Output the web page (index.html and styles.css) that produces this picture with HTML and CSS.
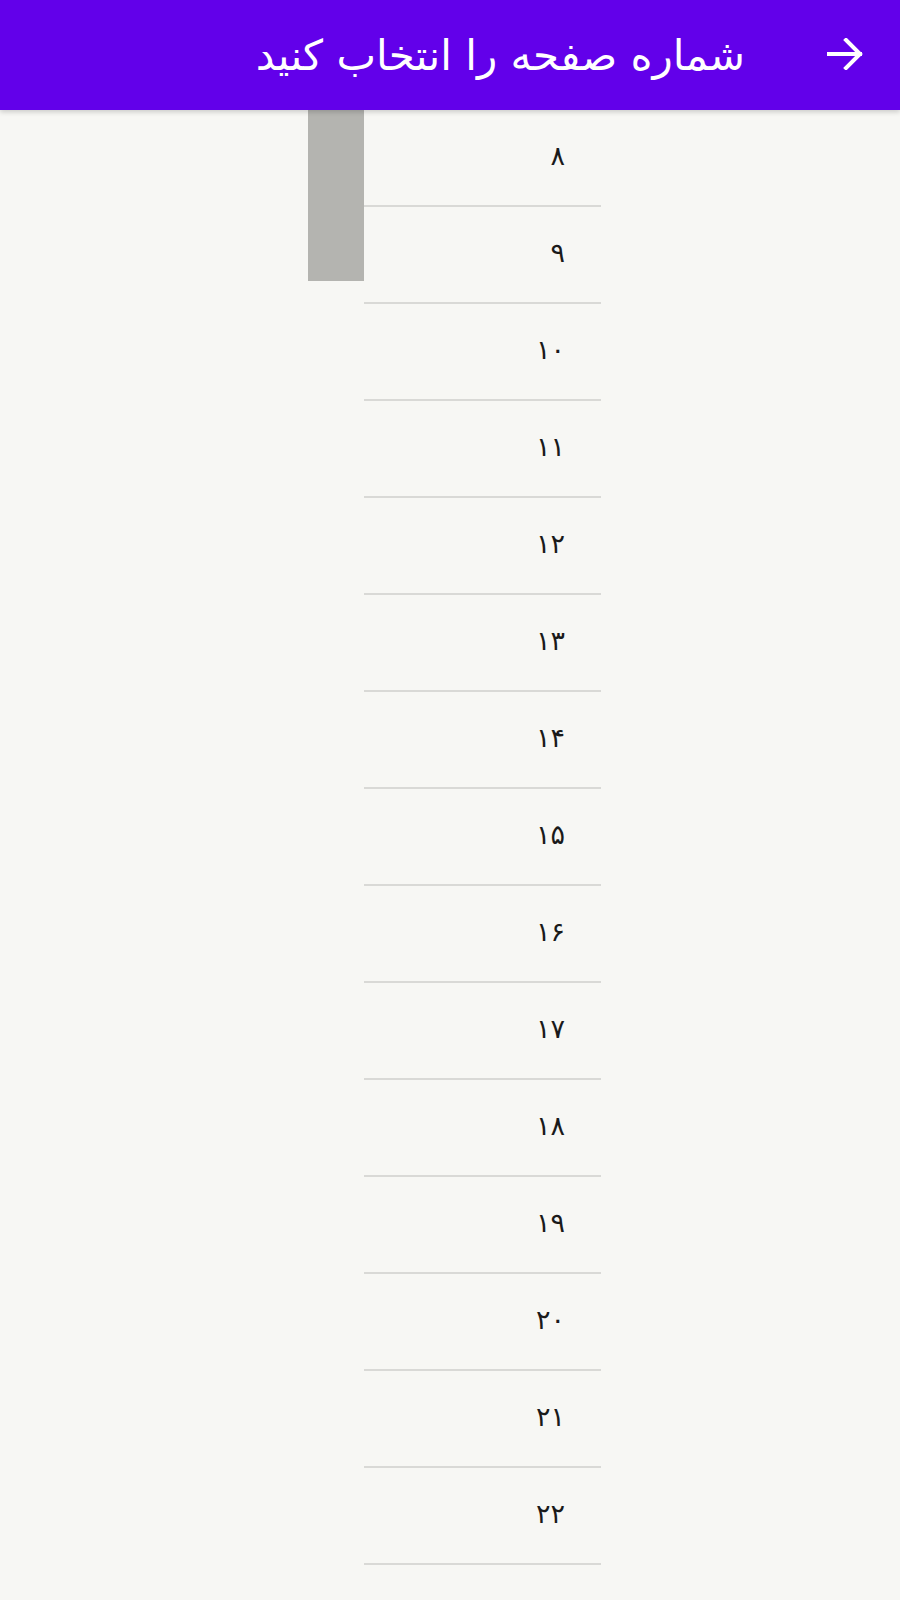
FILE: index.html
```html
<!DOCTYPE html>
<html lang="fa" dir="rtl">
<head>
<meta charset="utf-8">
<title>شماره صفحه را انتخاب کنید</title>
<link rel="stylesheet" href="styles.css">
</head>
<body>
<header class="appbar">
  <span class="back">
    <svg width="36" height="32" viewBox="0 0 36 32" aria-hidden="true">
      <path d="M2 16H33M19 2L33 16L19 30" fill="none" stroke="#fff" stroke-width="4" stroke-linecap="square"/>
    </svg>
  </span>
  <h1 class="title">شماره صفحه را انتخاب کنید</h1>
</header>
<main class="picker">
  <ul class="pages">
    <li class="page">۸</li>
    <li class="page">۹</li>
    <li class="page">۱۰</li>
    <li class="page">۱۱</li>
    <li class="page">۱۲</li>
    <li class="page">۱۳</li>
    <li class="page">۱۴</li>
    <li class="page">۱۵</li>
    <li class="page">۱۶</li>
    <li class="page">۱۷</li>
    <li class="page">۱۸</li>
    <li class="page">۱۹</li>
    <li class="page">۲۰</li>
    <li class="page">۲۱</li>
    <li class="page">۲۲</li>
  </ul>
  <div class="track"><div class="thumb"></div></div>
</main>
</body>
</html>
```
FILE: styles.css
```css
html, body {
  margin: 0;
  padding: 0;
  background: #f7f7f4;
  font-family: "DejaVu Sans", "Noto Sans", sans-serif;
  height: 1600px;
  overflow: hidden;
}
.appbar {
  position: relative;
  z-index: 2;
  height: 110px;
  background: #6200ea;
  display: flex;
  align-items: center;
  padding-right: 37px;
  gap: 82px;
  box-shadow: 0 2px 5px rgba(0,0,0,0.18);
}
.back {
  display: flex;
  width: 36px;
  height: 32px;
  margin-top: -2px;
}
.title {
  margin: 0;
  color: #ffffff;
  font-weight: normal;
  font-size: 42px;
  line-height: 1;
  margin-top: 2px;
}
.picker {
  display: flex;
  direction: rtl;
  width: 293px;
  margin-right: 299px;
}
.pages {
  list-style: none;
  margin: 0;
  padding: 0;
  width: 237px;
}
.page {
  border-bottom: 2px solid #d9d9d6;
  display: flex;
  align-items: center;
  padding-right: 36px;
  padding-bottom: 4px;
  box-sizing: content-box;
  height: 91px;
  font-size: 27px;
  color: #1a1a1a;
}
.track {
  width: 56px;
}
.thumb {
  width: 56px;
  height: 171px;
  background: #b4b4b0;
}
```
